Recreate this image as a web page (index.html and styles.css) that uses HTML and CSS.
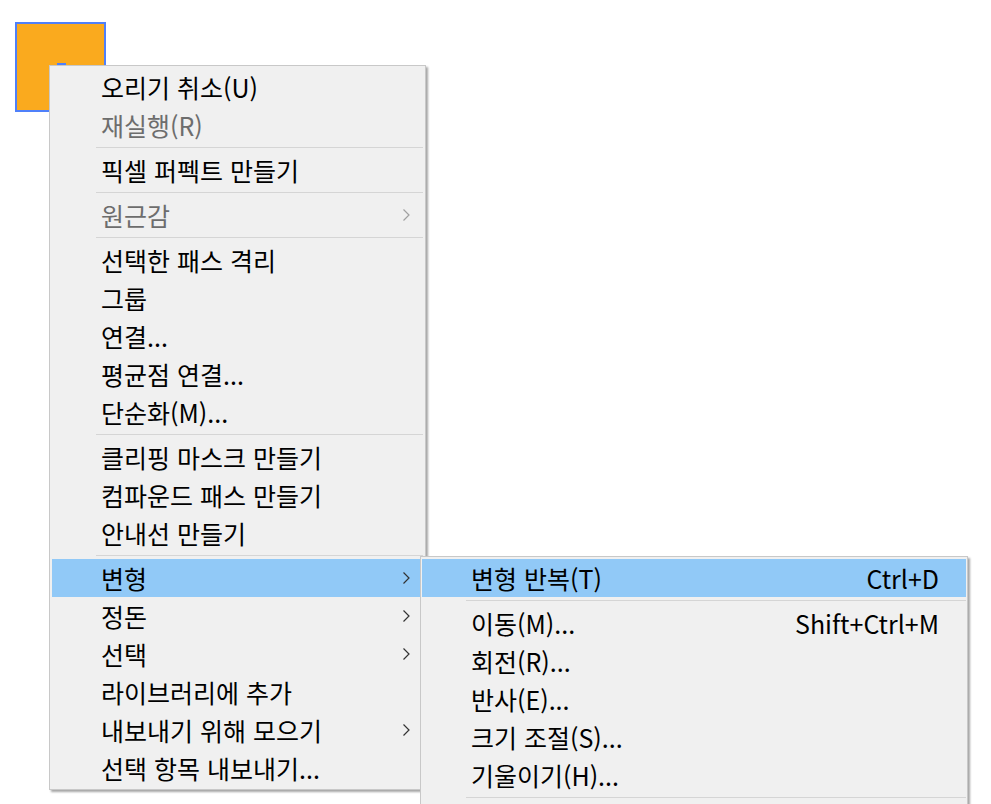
FILE: index.html
```html
<!DOCTYPE html>
<html lang="ko">
<head>
<meta charset="utf-8">
<link rel="stylesheet" href="styles.css">
</head>
<body>
<div class="canvas">
  <div class="shape"><span class="center-mark"></span></div>

  <div class="menu main-menu">
    <div class="item">오리기 취소(U)</div>
    <div class="item disabled">재실행(R)</div>
    <div class="sep"></div>
    <div class="item">픽셀 퍼펙트 만들기</div>
    <div class="sep"></div>
    <div class="item disabled">원근감<svg class="arrow" viewBox="0 0 7 12"><path d="M0.5 0.5 L6 6 L0.5 11.5"/></svg></div>
    <div class="sep"></div>
    <div class="item">선택한 패스 격리</div>
    <div class="item">그룹</div>
    <div class="item">연결...</div>
    <div class="item">평균점 연결...</div>
    <div class="item">단순화(M)...</div>
    <div class="sep"></div>
    <div class="item">클리핑 마스크 만들기</div>
    <div class="item">컴파운드 패스 만들기</div>
    <div class="item">안내선 만들기</div>
    <div class="sep"></div>
    <div class="item active">변형<svg class="arrow" viewBox="0 0 7 12"><path d="M0.5 0.5 L6 6 L0.5 11.5"/></svg></div>
    <div class="item">정돈<svg class="arrow" viewBox="0 0 7 12"><path d="M0.5 0.5 L6 6 L0.5 11.5"/></svg></div>
    <div class="item">선택<svg class="arrow" viewBox="0 0 7 12"><path d="M0.5 0.5 L6 6 L0.5 11.5"/></svg></div>
    <div class="item">라이브러리에 추가</div>
    <div class="item">내보내기 위해 모으기<svg class="arrow" viewBox="0 0 7 12"><path d="M0.5 0.5 L6 6 L0.5 11.5"/></svg></div>
    <div class="item">선택 항목 내보내기...</div>
  </div>

  <div class="menu sub-menu">
    <div class="item active"><span>변형 반복(T)</span><span class="key">Ctrl+D</span></div>
    <div class="sep"></div>
    <div class="item"><span>이동(M)...</span><span class="key">Shift+Ctrl+M</span></div>
    <div class="item">회전(R)...</div>
    <div class="item">반사(E)...</div>
    <div class="item">크기 조절(S)...</div>
    <div class="item">기울이기(H)...</div>
    <div class="sep"></div>
  </div>
</div>
</body>
</html>
```

FILE: styles.css
```css
html, body {
  margin: 0;
  padding: 0;
  background: #ffffff;
  overflow: hidden;
}

.canvas {
  position: relative;
  width: 991px;
  height: 804px;
  overflow: hidden;
  font-family: "Noto Sans CJK KR", "Noto Sans", sans-serif;
}

.shape {
  position: absolute;
  left: 15px;
  top: 22px;
  width: 87px;
  height: 86px;
  background: #faaa1e;
  border: 2px solid #4f80fa;
}

.center-mark {
  position: absolute;
  left: 40px;
  top: 39px;
  width: 9px;
  height: 3px;
  background: #4f80fa;
}

.menu {
  position: absolute;
  background: #f0f0f0;
  border: 1px solid #c8c8c8;
  box-shadow: 2px 2px 2px rgba(0, 0, 0, 0.35);
  box-sizing: border-box;
}

.main-menu {
  left: 49px;
  top: 65px;
  width: 377px;
  height: 725px;
  padding: 2px 5px 2px 2px;
}

.sub-menu {
  left: 420px;
  top: 556px;
  width: 548px;
  height: 300px;
  padding: 2px 1px;
}

.item {
  display: flex;
  align-items: center;
  justify-content: space-between;
  height: 38px;
  padding: 0 27px 0 49px;
  font-size: 25px;
  color: #000000;
  white-space: nowrap;
}

.main-menu .item {
  padding-right: 10px;
}

.item.disabled {
  color: #6d6d6d;
}

.item.active {
  background: #91c9f7;
}

.sep {
  height: 7px;
  display: flex;
  align-items: center;
  padding-left: 44px;
}

.sep::after {
  content: "";
  display: block;
  flex: 1;
  height: 1px;
  background: #d5d5d5;
}

.main-menu .sep {
  margin-right: -3px;
}

.arrow {
  width: 7px;
  height: 12px;
  fill: none;
  stroke: #333333;
  stroke-width: 1.2;
}

.disabled .arrow {
  stroke: #a0a0a0;
}

.key {
  color: #000000;
}
```
